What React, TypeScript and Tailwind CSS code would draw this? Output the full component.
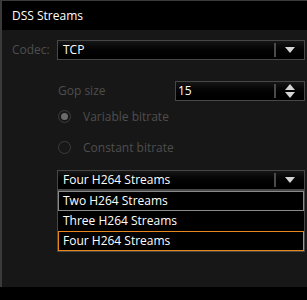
import React from 'react';

const font = { fontFamily: '"Open Sans", "Noto Sans", sans-serif' };

// Small white triangle pointing down (combo arrow)
const ArrowDown = () => (
  <svg width="10" height="6" viewBox="0 0 10 6" className="block">
    <path d="M0 0 H10 L5 6 Z" fill="#d4d4d4" />
  </svg>
);

const SpinArrows = () => (
  <svg width="10" height="14" viewBox="0 0 10 14" className="block">
    <path d="M5 0 L10 6 H0 Z" fill="#d4d4d4" />
    <path d="M0 8 H10 L5 14 Z" fill="#d4d4d4" />
  </svg>
);

interface ComboProps {
  value: string;
}

const Combo: React.FC<ComboProps> = ({ value }) => (
  <div className="flex h-[20px] items-center border border-[#474747] bg-gradient-to-b from-[#161616] to-[#000000]">
    <span className="flex-1 pl-[5px] text-[12px] leading-none text-white">{value}</span>
    <div className="h-[14px] w-[2px] bg-[#4a4a4a]" />
    <div className="flex w-[28px] justify-center">
      <ArrowDown />
    </div>
  </div>
);

const Radio = ({ checked, label }: { checked?: boolean; label: string }) => (
  <div className="flex h-[17px] items-center">
    <div className="flex h-[13px] w-[13px] items-center justify-center rounded-full border border-[#3c3c3c]">
      {checked && <div className="h-[7px] w-[7px] rounded-full bg-[#6a6a6a]" />}
    </div>
    <span className="ml-[12px] text-[12px] leading-none text-[#4e4e4e]">{label}</span>
  </div>
);

const options = ['Two H264 Streams', 'Three H264 Streams', 'Four H264 Streams'];

export default function App() {
  return (
    <div className="h-[300px] w-[307px] bg-black" style={font}>
      <div className="flex h-[287px] flex-col border-l-2 border-t border-[#3a3a3a]">
        <div className="flex h-[29px] items-center bg-black pl-[10px] text-[12px] text-white">
          DSS Streams
        </div>
        <div className="flex-1 bg-[#171717] pl-[10px] pr-[2px] pt-[10px]">
          <div className="flex items-center">
            <span className="w-[45px] text-[12px] text-[#4e4e4e]">Codec:</span>
            <div className="flex-1">
              <Combo value="TCP" />
            </div>
          </div>

          <div className="ml-[45px]">
            <div className="mt-[21px] flex h-[20px] items-center">
              <span className="w-[118px] pl-[1px] text-[12px] text-[#4e4e4e]">Gop size</span>
              <div className="flex h-[20px] flex-1 items-center border border-[#474747] bg-gradient-to-b from-[#161616] to-[#000000]">
                <span className="flex-1 pl-[2px] text-[12px] leading-none text-white">15</span>
                <div className="h-[14px] w-[2px] bg-[#4a4a4a]" />
                <div className="flex w-[28px] justify-center">
                  <SpinArrows />
                </div>
              </div>
            </div>

            <div className="mt-[7px] flex flex-col gap-[14px] pl-[1px]">
              <Radio checked label="Variable bitrate" />
              <Radio label="Constant bitrate" />
            </div>

            <div className="mt-[14px]">
              <Combo value="Four H264 Streams" />
              <div className="flex flex-col border border-[#474747] bg-black">
                {options.map((o, i) => (
                  <div
                    key={o}
                    className={
                      i === 0
                        ? 'flex h-[20px] items-center border border-[#8a8a8a] pl-[4px] text-[12px] text-white'
                        : i === 2
                        ? 'flex h-[20px] items-center border border-[#e8871e] pl-[4px] text-[12px] text-white'
                        : 'flex h-[20px] items-center border border-transparent pl-[4px] text-[12px] text-white'
                    }
                  >
                    {o}
                  </div>
                ))}
              </div>
            </div>
          </div>
        </div>
      </div>
    </div>
  );
}
